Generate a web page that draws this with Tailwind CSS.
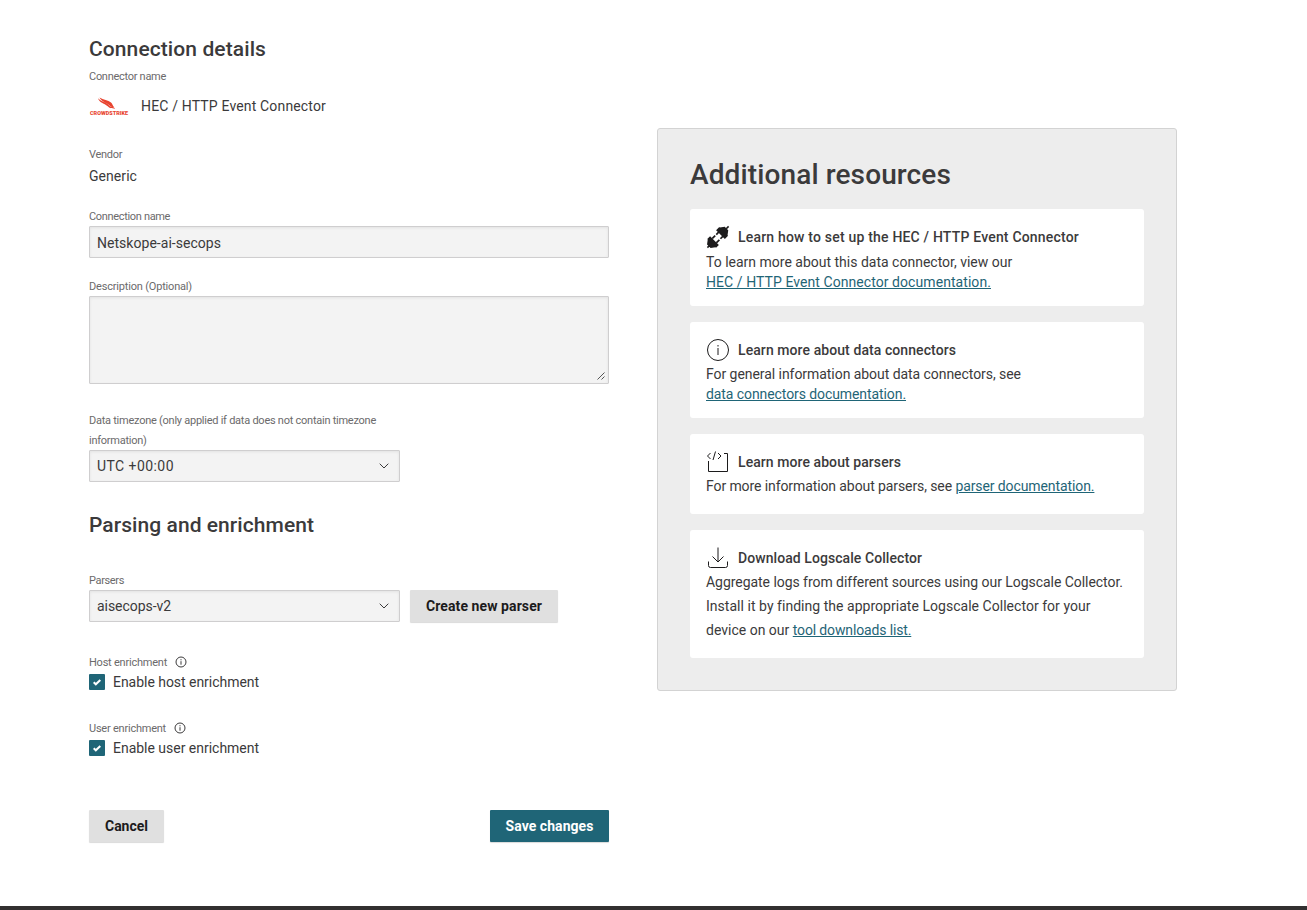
<!DOCTYPE html>
<html lang="en">
<head>
<meta charset="utf-8">
<title>Connection details</title>
<script src="https://cdn.jsdelivr.net/npm/@tailwindcss/browser@4"></script>
</head>
<body class="h-[910px] overflow-hidden bg-white font-['Roboto','Liberation_Sans',sans-serif] text-sm text-[#3b3a3b]">
<div class="flex h-[906px] items-start gap-12 pl-[89px]">
  <main class="flex w-[520px] flex-col pt-9">
    <h1 class="h-[26px] text-[21px] leading-[26px] font-medium tracking-[0.095px]">Connection details</h1>
    <div class="mt-1 h-5 pt-px text-[11px] leading-5 tracking-[-0.28px] text-[#6b6a6b]">Connector name</div>
    <div class="flex h-10 items-center gap-3">
      <svg class="h-10 w-10" viewBox="0 0 40 40">
        <g fill="#e8432f">
          <path d="M9 12.200c2.500 2.800 6 3.300 9 5.200 2 1.300 2.200 2.700 4.300 3.400 1.300.4 3 .2 3.700 2.200-1.600-1.100-3.200-.5-4.700-1-1.800-.7-2.600-2.100-4.800-3.300-3.200-1.800-6.300-2.900-7.500-6.500z"/>
          <path d="M10.500 11.500c3.800 2.500 8.700 2.700 11.500 5 1.500 1.300 1.500 3.200 3.200 4.700-3 .3-4.400-1.700-6.200-2.900-3-2-6.700-3.200-8.500-6.800z"/>
        </g>
        <text x="1" y="28.500" textLength="38" lengthAdjust="spacingAndGlyphs" font-size="5.500" font-weight="900" letter-spacing="0" fill="#e8432f">CROWDSTRIKE</text>
      </svg>
      <span class="tracking-[0.16px]">HEC / HTTP Event Connector</span>
    </div>
    <div class="mt-[18px] h-5 pt-px text-[11px] leading-5 tracking-[-0.3px] text-[#6b6a6b]">Vendor</div>
    <div class="h-6 leading-6 tracking-[0.06px]">Generic</div>
    <div class="mt-[18px] h-5 pt-px text-[11px] leading-5 tracking-[-0.33px] text-[#6b6a6b]">Connection name</div>
    <div class="flex h-8 items-center rounded-[1px] border border-[#cfcecf] bg-[#f3f3f3] px-[7px] pt-0.5 tracking-[0.034px] shadow-[inset_0_1px_3px_rgba(0,0,0,0.07)]">Netskope-ai-secops</div>
    <div class="mt-[18px] h-5 pt-px text-[11px] leading-5 tracking-[-0.184px] text-[#6b6a6b]">Description (Optional)</div>
    <div class="flex h-[88px] items-end justify-end rounded-[1px] border border-[#cfcecf] bg-[#f3f3f3] p-[3px] shadow-[inset_0_1px_3px_rgba(0,0,0,0.07)]">
      <svg class="h-2 w-2" viewBox="0 0 8 8" fill="none" stroke="#555"><path d="M.5 7.500l7-7M4.500 7.500l3-3"/></svg>
    </div>
    <div class="mt-[26px] h-10 pt-px text-[11px] leading-5 tracking-[-0.251px] text-[#6b6a6b]">Data timezone (only applied if data does not contain timezone<br>information)</div>
    <div class="flex h-8 w-[311px] items-center justify-between rounded-[1px] border border-[#cfcecf] bg-[#f3f3f3] pr-2.5 pl-[7px] shadow-[inset_0_1px_3px_rgba(0,0,0,0.07)]">
      <span class="tracking-[0.43px]">UTC +00:00</span>
      <svg class="h-[6px] w-[10px]" viewBox="0 0 10 6" fill="none" stroke="#3b3a3b"><path d="M.7.7L5 5 9.300.7"/></svg>
    </div>
    <h2 class="mt-[30px] h-[26px] text-[21px] leading-[26px] font-medium tracking-[0.062px]">Parsing and enrichment</h2>
    <div class="mt-8 h-5 pt-px text-[11px] leading-5 tracking-[-0.35px] text-[#6b6a6b]">Parsers</div>
    <div class="flex gap-2.5">
      <div class="flex h-8 w-[311px] items-center justify-between rounded-[1px] border border-[#cfcecf] bg-[#f3f3f3] pr-2.5 pl-[7px] shadow-[inset_0_1px_3px_rgba(0,0,0,0.07)]">
        <span class="tracking-[-0.054px]">aisecops-v2</span>
        <svg class="h-[6px] w-[10px]" viewBox="0 0 10 6" fill="none" stroke="#3b3a3b"><path d="M.7.7L5 5 9.300.7"/></svg>
      </div>
      <button class="flex h-8 w-[148px] items-center justify-center rounded-[1px] bg-[#e0e0e0] font-bold tracking-[0.086px] text-[#1c1b1c] shadow-[0_1px_1px_rgba(0,0,0,0.15)]">Create new parser</button>
    </div>
    <div class="mt-[30px] flex h-5 items-center gap-2 text-[11px] leading-5 text-[#6b6a6b]"><span class="pt-px tracking-[-0.227px]">Host enrichment</span>
      <svg class="h-3 w-3" viewBox="0 0 12 12" fill="none" stroke="#3b3a3b"><circle cx="6" cy="6" r="5"/><path d="M6 5.200v3.500M6 3.200v1.100"/></svg></div>
    <div class="flex h-5 items-center gap-2">
      <svg class="h-4 w-4" viewBox="0 0 16 16"><rect width="16" height="16" rx="1" fill="#1f6577"/><path d="M4.700 8.300l2.100 2 4.500-4.300" fill="none" stroke="#fff" stroke-width="2"/></svg>
      <span class="tracking-[-0.036px]">Enable host enrichment</span></div>
    <div class="mt-[26px] flex h-5 items-center gap-2 text-[11px] leading-5 text-[#6b6a6b]"><span class="pt-px tracking-[-0.226px]">User enrichment</span>
      <svg class="h-3 w-3" viewBox="0 0 12 12" fill="none" stroke="#3b3a3b"><circle cx="6" cy="6" r="5"/><path d="M6 5.200v3.500M6 3.200v1.100"/></svg></div>
    <div class="flex h-5 items-center gap-2">
      <svg class="h-4 w-4" viewBox="0 0 16 16"><rect width="16" height="16" rx="1" fill="#1f6577"/><path d="M4.700 8.300l2.100 2 4.500-4.300" fill="none" stroke="#fff" stroke-width="2"/></svg>
      <span class="tracking-[-0.018px]">Enable user enrichment</span></div>
    <div class="mt-[52px] flex justify-between">
      <button class="flex h-8 w-[75px] items-center justify-center rounded-[1px] bg-[#e0e0e0] font-bold text-[#1c1b1c] shadow-[0_1px_1px_rgba(0,0,0,0.15)]">Cancel</button>
      <button class="flex h-8 w-[119px] items-center justify-center rounded-[1px] bg-[#1f6577] font-bold tracking-[0.06px] text-white shadow-[0_1px_1px_rgba(0,0,0,0.15)]">Save changes</button>
    </div>
  </main>
  <aside class="mt-32 h-[563px] w-[520px] rounded-[3px] border border-[#d3d3d3] bg-[#ededed] px-8 pt-[29px]">
    <h2 class="h-[34px] text-[28px] leading-[34px] font-medium tracking-[0.122px]">Additional resources</h2>
    <section class="mt-[17px] h-[97px] rounded-[3px] bg-white px-4 pt-4">
      <div class="flex h-6 items-center gap-2 font-medium">
        <svg class="h-6 w-6" viewBox="0 0 24 24"><g transform="rotate(-45 12 12)" fill="#1c1b1c"><path d="M-3 11.200h3v1.600h-3zM-1 9.500l4-3V5.800h4v12.400H3v-.7l-4-3zM7 8.200h4v1.700H7zM7 14.100h4v1.700H7zM15.500 5.800h4.500v.7l4 3v5l-4 3v.7h-4.500zM24 11.200h3v1.600h-3zM12.500 8.200h3v1.700h-3zM12.500 14.100h3v1.700h-3z"/></g></svg>
        <span class="tracking-[0.193px]">Learn how to set up the HEC / HTTP Event Connector</span></div>
      <p class="pt-[3px] leading-5">To learn more about this data connector, view our<br><a class="tracking-[0.066px] text-[#1f6577] underline">HEC / HTTP Event Connector documentation.</a></p>
    </section>
    <section class="mt-4 h-24 rounded-[3px] bg-white px-4 pt-4">
      <div class="flex h-6 items-center gap-2 font-medium">
        <svg class="h-6 w-6" viewBox="0 0 24 24" fill="none" stroke="#1c1b1c"><circle cx="12" cy="12" r="10.500"/><path d="M12 10v7M12 7v1.500"/></svg>
        <span class="tracking-[0.081px]">Learn more about data connectors</span></div>
      <p class="pt-0.5 leading-5 tracking-[-0.053px]">For general information about data connectors, see<br><a class="tracking-[-0.084px] text-[#1f6577] underline">data connectors documentation.</a></p>
    </section>
    <section class="mt-4 h-20 rounded-[3px] bg-white px-4 pt-4">
      <div class="flex h-6 items-center gap-2 font-medium">
        <svg class="h-6 w-6" viewBox="0 0 24 24" fill="none" stroke="#1c1b1c"><path d="M2.500 11v10.500h19v-18H18"/><path d="M4.500 3L1.500 6l3 3M12 3l3 3-3 3M9.500 1.500l-2.500 8.500"/></svg>
        <span class="tracking-[0.072px]">Learn more about parsers</span></div>
      <p class="leading-6 tracking-[-0.096px]">For more information about parsers, see <a class="text-[#1f6577] underline">parser documentation.</a></p>
    </section>
    <section class="mt-4 h-32 rounded-[3px] bg-white px-4 pt-4">
      <div class="flex h-6 items-center gap-2 font-medium">
        <svg class="h-6 w-6" viewBox="0 0 24 24" fill="none" stroke="#1c1b1c"><path d="M2.500 15.500v4q0 2 2 2h15q2 0 2-2v-4M12 1.500v14M6.500 10.500l5.500 5.500 5.500-5.500"/></svg>
        <span class="tracking-[0.068px]">Download Logscale Collector</span></div>
      <p class="leading-6"><span class="tracking-[-0.045px]">Aggregate logs from different sources using our Logscale Collector.</span><br><span class="tracking-[0.033px]">Install it by finding the appropriate Logscale Collector for your</span><br>device on our <a class="tracking-[-0.14px] text-[#1f6577] underline">tool downloads list.</a></p>
    </section>
  </aside>
</div>
<footer class="h-1 bg-[#323030]"></footer>
</body>
</html>
